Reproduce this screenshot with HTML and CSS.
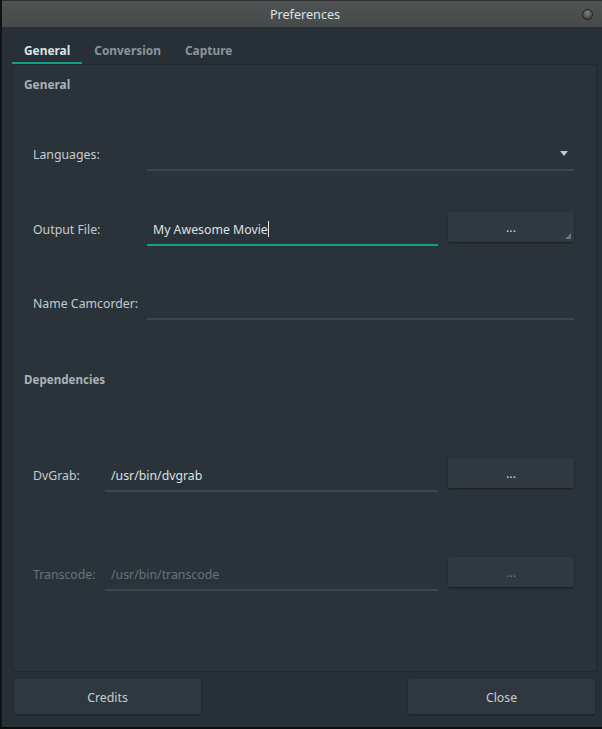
FILE: index.html
```html
<!DOCTYPE html>
<html>
<head>
<meta charset="utf-8">
<title>Preferences</title>
<link rel="stylesheet" href="styles.css">
</head>
<body>
<div class="window">
  <header class="titlebar">
    <span></span>
    <span class="title">Preferences</span>
    <span class="close-dot"></span>
  </header>
  <div class="content">
    <nav class="tabs">
      <span class="tab active">General</span>
      <span class="tab">Conversion</span>
      <span class="tab">Capture</span>
    </nav>
    <section class="panel">
      <h2 class="section-title">General</h2>
      <div class="row row-lang">
        <span class="label wide">Languages:</span>
        <div class="field combo"><span class="combo-arrow"></span></div>
      </div>
      <div class="row row-output">
        <span class="label wide">Output File:</span>
        <div class="field short focused"><span class="value">My Awesome Movie</span><span class="caret"></span></div>
        <button class="dots-btn with-menu">...</button>
      </div>
      <div class="row row-name">
        <span class="label wide">Name Camcorder:</span>
        <div class="field"></div>
      </div>
      <h2 class="section-title deps">Dependencies</h2>
      <div class="row row-dvgrab">
        <span class="label narrow">DvGrab:</span>
        <div class="field short"><span class="value">/usr/bin/dvgrab</span></div>
        <button class="dots-btn">...</button>
      </div>
      <div class="row row-transcode disabled">
        <span class="label narrow">Transcode:</span>
        <div class="field short"><span class="value">/usr/bin/transcode</span></div>
        <button class="dots-btn">...</button>
      </div>
    </section>
    <footer class="actions">
      <button class="action-btn">Credits</button>
      <button class="action-btn">Close</button>
    </footer>
  </div>
</div>
</body>
</html>
```
FILE: styles.css
```css
html, body {
  margin: 0;
  padding: 0;
  background: #0c0e0f;
}
body {
  font-family: "Noto Sans", "Open Sans", sans-serif;
  font-size: 12.3px;
  color: #c6cbce;
}
.window {
  width: 602px;
  height: 729px;
  box-sizing: border-box;
  border-left: 2px solid #101314;
  border-bottom: 2px solid #0b0d0e;
  background: #263036;
  display: flex;
  flex-direction: column;
}
.titlebar {
  height: 27px;
  box-sizing: border-box;
  border-top: 1px solid #2e3030;
  background: linear-gradient(#505353, #474a4a);
  display: grid;
  grid-template-columns: 1fr auto 1fr;
  align-items: center;
}
.title {
  color: #dce5ec;
  font-size: 12.6px;
  padding: 1px 0 0 6px;
}
.close-dot {
  justify-self: end;
  margin-right: 9px;
  width: 11px;
  height: 11px;
  border-radius: 50%;
  box-sizing: border-box;
  border: 1px solid #1e1f1f;
  background: radial-gradient(circle at 50% 35%, #7d8080, #4a4c4c 70%);
}
.content {
  flex: 1;
  display: flex;
  flex-direction: column;
}
.tabs {
  display: flex;
  margin: 11px 0 0 10px;
  height: 26px;
}
.tab {
  padding: 0 12px;
  font-weight: bold;
  font-size: 11.9px;
  color: #8b969b;
  line-height: 24px;
  border-bottom: 2px solid transparent;
}
.tab.active {
  color: #dde2e4;
  border-bottom-color: #17a085;
}
.panel {
  flex: 1;
  margin: 0 5px 0 10px;
  border: 1px solid #20292e;
  background: #2a3339;
  padding: 10px 22px 0 11px;
  display: flex;
  flex-direction: column;
}
.section-title {
  margin: 0;
  font-size: 11.9px;
  font-weight: bold;
  line-height: 18px;
  color: #a9b2b6;
}
.section-title.deps {
  margin-top: 51px;
  font-size: 11.6px;
}
.row {
  display: flex;
  align-items: flex-start;
  height: 34px;
  padding-left: 9px;
}
.row-lang { margin-top: 44px; }
.row-output { margin-top: 41px; }
.row-name { margin-top: 40px; }
.row-dvgrab { margin-top: 69px; }
.row-transcode { margin-top: 65px; }
.label {
  line-height: 34px;
  padding-top: 1px;
  flex: none;
}
.label.wide { width: 114px; }
.label.narrow { width: 72px; }
.field {
  flex: 1;
  height: 34px;
  box-sizing: border-box;
  border-bottom: 2px solid #3c464c;
  display: flex;
  align-items: center;
  padding-left: 6px;
  position: relative;
}
.field.short {
  flex: none;
  width: 291px;
}
.row-dvgrab .field.short,
.row-transcode .field.short {
  width: 333px;
}
.field.focused {
  border-bottom-color: #18a086;
}
.value {
  color: #dde1e3;
  line-height: 32px;
  padding-top: 3px;
}
.caret {
  width: 1px;
  height: 16px;
  background: #e6e9ea;
  margin-top: 2px;
}
.combo-arrow {
  position: absolute;
  right: 6px;
  top: 14px;
  width: 0;
  height: 0;
  border-left: 4px solid transparent;
  border-right: 4px solid transparent;
  border-top: 5px solid #c3c7c9;
}
.dots-btn {
  flex: none;
  margin-left: 10px;
  width: 126px;
  height: 30px;
  border: none;
  border-radius: 2px;
  background: #2f393f;
  box-shadow: 0 1px 2px rgba(0, 0, 0, 0.45);
  color: #d3d7d9;
  font-family: inherit;
  font-size: 12.3px;
  padding: 1px 0 0;
  position: relative;
}
.dots-btn.with-menu::after {
  content: "";
  position: absolute;
  right: 3px;
  bottom: 3px;
  width: 0;
  height: 0;
  border-left: 6px solid transparent;
  border-bottom: 6px solid #6b7478;
}
.disabled .label,
.disabled .value {
  color: #68737a;
}
.disabled .dots-btn {
  color: #6f797e;
}
.actions {
  display: flex;
  justify-content: space-between;
  padding: 7px 7px 13px 12px;
}
.action-btn {
  width: 187px;
  height: 35px;
  border: none;
  border-radius: 2px;
  background: #2e383e;
  box-shadow: 0 1px 2px rgba(0, 0, 0, 0.35);
  color: #c9ced0;
  font-family: inherit;
  font-size: 12.3px;
  padding: 2px 0 0;
}
```
